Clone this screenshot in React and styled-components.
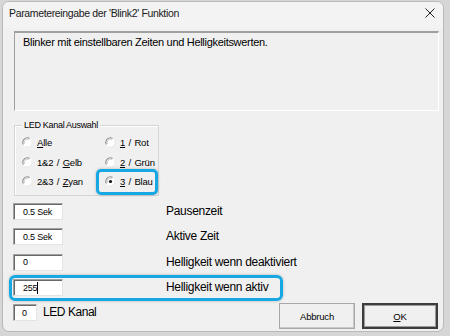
import React from 'react'
import styled, { createGlobalStyle } from 'styled-components'

const GlobalStyle = createGlobalStyle`
  html, body {
    margin: 0;
    padding: 0;
    background: #d6d6d6;
    width: 450px;
    height: 336px;
    overflow: hidden;
  }
  * {
    box-sizing: border-box;
  }
`

const channels = [
  { pre: '', key: 'A', post: 'lle' },
  { pre: '', key: '1', post: ' / Rot' },
  { pre: '1&2 / ', key: 'G', post: 'elb' },
  { pre: '', key: '2', post: ' / Grün' },
  { pre: '2&3 / ', key: 'Z', post: 'yan' },
  { pre: '', key: '3', post: ' / Blau', checked: true },
]

const params = [
  { value: '0.5 Sek', label: 'Pausenzeit' },
  { value: '0.5 Sek', label: 'Aktive Zeit' },
  { value: '0', label: 'Helligkeit wenn deaktiviert' },
  { value: '255', label: 'Helligkeit wenn aktiv', marked: true, caret: true },
]

const RadioDot = ({ checked }) => (
  <svg width='11' height='11' viewBox='0 0 11 11'>
    <circle cx='5.5' cy='5.5' r='4.8' fill='#fff' />
    <path d='M1.4 7.6 A4.6 4.6 0 0 1 7.6 1.4' stroke='#8a8a8a' strokeWidth='1.1' fill='none' />
    <path d='M2.3 6.9 A3.6 3.6 0 0 1 6.9 2.3' stroke='#c8c8c8' strokeWidth='1' fill='none' />
    <path d='M9.6 3.4 A4.6 4.6 0 0 1 3.4 9.6' stroke='#e6e6e6' strokeWidth='1' fill='none' />
    {checked && <circle cx='5.5' cy='5.5' r='1.6' fill='#111' />}
  </svg>
)

const App = () => {
  return (
    <>
      <GlobalStyle />
      <Window>
        <TitleBar>
          <span>Parametereingabe der 'Blink2' Funktion</span>
          <svg width='10' height='10' viewBox='0 0 10 10'>
            <path d='M0.5 0.5 L9.5 9.5 M9.5 0.5 L0.5 9.5' stroke='#222' strokeWidth='1' />
          </svg>
        </TitleBar>
        <Body>
          <Description>Blinker mit einstellbaren Zeiten und Helligkeitswerten.</Description>
          <GroupBox>
            <Legend>LED Kanal Auswahl</Legend>
            <RadioGrid>
              {channels.map((c, i) => (
                <RadioItem key={i} $marked={c.checked}>
                  <RadioDot checked={c.checked} />
                  <span>
                    {c.pre}
                    <u>{c.key}</u>
                    {c.post}
                  </span>
                </RadioItem>
              ))}
            </RadioGrid>
          </GroupBox>
          <ParamList>
            {params.map((p, i) => (
              <ParamRow key={i} $marked={p.marked}>
                <Field>
                  {p.value}
                  {p.caret && <Caret />}
                </Field>
                <ParamLabel>{p.label}</ParamLabel>
              </ParamRow>
            ))}
          </ParamList>
          <BottomRow>
            <ChannelField>0</ChannelField>
            <ChannelLabel>LED Kanal</ChannelLabel>
            <Buttons>
              <Button>Abbruch</Button>
              <Button $default>
                <u>O</u>K
              </Button>
            </Buttons>
          </BottomRow>
        </Body>
      </Window>
    </>
  )
}

const Window = styled.div`
  margin: 1px 0 0 2px;
  width: 442px;
  height: 331px;
  background: #f0f0f0;
  border: 1px solid #b9b9b9;
  border-radius: 7px;
  overflow: hidden;
  display: flex;
  flex-direction: column;
  font-family: 'Liberation Sans', Arial, sans-serif;
  color: #000;
`

const TitleBar = styled.div`
  height: 26px;
  flex-shrink: 0;
  display: flex;
  align-items: center;
  justify-content: space-between;
  padding: 0 8px 4px 6px;
  background: #f3f3f3;
  font-size: 10.5px;
  letter-spacing: -0.35px;
  color: #1a1a1a;
`

const Body = styled.div`
  padding: 3px 4px 0 10px;
  display: flex;
  flex-direction: column;
`

const Description = styled.div`
  margin-left: 1px;
  width: 425px;
  height: 80px;
  border-top: 2px solid #a0a0a0;
  border-left: 1px solid #a0a0a0;
  border-right: 1px solid #fff;
  border-bottom: 1px solid #fff;
  padding: 2px 0 0 8px;
  font-size: 11px;
  letter-spacing: -0.3px;
  line-height: 14px;
`

const GroupBox = styled.div`
  position: relative;
  margin: 14px 0 0 1px;
  width: 145px;
  height: 71px;
  border: 1px solid #d5d5d5;
  box-shadow: inset 1px 1px 0 #fff;
`

const Legend = styled.span`
  position: absolute;
  top: -6px;
  left: 7px;
  padding: 0 2px;
  background: #f0f0f0;
  font-size: 9px;
  letter-spacing: -0.3px;
  line-height: 11px;
  white-space: nowrap;
`

const RadioGrid = styled.div`
  display: grid;
  grid-template-columns: 83px auto;
  grid-auto-rows: 19.5px;
  padding: 7px 0 0 7px;
`

const RadioItem = styled.div`
  position: relative;
  display: flex;
  align-items: center;
  gap: 4px;
  font-size: 9.5px;
  letter-spacing: -0.2px;
  word-spacing: 1px;
  white-space: nowrap;
  justify-self: start;
  ${({ $marked }) =>
    $marked &&
    `
    &::after {
      content: '';
      position: absolute;
      top: -3px;
      bottom: -3px;
      left: -9px;
      right: -5px;
      border: 3px solid #17a8e3;
      border-radius: 5px;
      box-shadow: 0 0 3px rgba(0, 0, 0, 0.25);
    }
  `}
`

const ParamList = styled.div`
  margin-top: 7px;
  display: flex;
  flex-direction: column;
  gap: 8.4px;
`

const ParamRow = styled.div`
  position: relative;
  display: grid;
  grid-template-columns: 153px auto;
  align-items: center;
  height: 17px;
  ${({ $marked }) =>
    $marked &&
    `
    &::after {
      content: '';
      position: absolute;
      top: -4px;
      bottom: -5px;
      left: -4px;
      width: 268px;
      border: 3px solid #17a8e3;
      border-radius: 6px;
      box-shadow: 0 0 3px rgba(0, 0, 0, 0.25);
    }
  `}
`

const Field = styled.div`
  width: 50px;
  height: 17px;
  background: #fff;
  border-top: 1px solid #a0a0a0;
  border-left: 1px solid #a0a0a0;
  border-right: 1px solid #e3e3e3;
  border-bottom: 1px solid #e3e3e3;
  box-shadow: inset 1px 1px 0 #696969;
  padding: 0 0 0 9px;
  font-size: 9px;
  letter-spacing: -0.2px;
  line-height: 16px;
  display: flex;
  align-items: center;
`

const Caret = styled.span`
  display: inline-block;
  width: 1px;
  height: 12px;
  background: #000;
`

const ParamLabel = styled.span`
  font-size: 12px;
  letter-spacing: -0.3px;
  line-height: 17px;
  white-space: nowrap;
`

const BottomRow = styled.div`
  margin-top: 8px;
  display: flex;
  align-items: flex-start;
`

const ChannelField = styled(Field)`
  width: 24px;
  padding-left: 8px;
`

const ChannelLabel = styled.span`
  margin-left: 6px;
  font-size: 12px;
  letter-spacing: -0.45px;
  line-height: 17px;
`

const Buttons = styled.div`
  margin: -1px 0 0 auto;
  display: flex;
  gap: 7px;
  padding-right: 1px;
`

const Button = styled.div`
  width: 76px;
  height: 26px;
  display: flex;
  align-items: center;
  justify-content: center;
  font-size: 9.5px;
  letter-spacing: -0.2px;
  background: #f0f0f0;
  border: ${({ $default }) => ($default ? '2px solid #3c3c3c' : '1px solid #a8a8a8')};
  box-shadow: ${({ $default }) => ($default ? 'inset 0 0 0 1px #9a9a9a' : 'inset -1px -1px 0 #c8c8c8')};
`

export default App
